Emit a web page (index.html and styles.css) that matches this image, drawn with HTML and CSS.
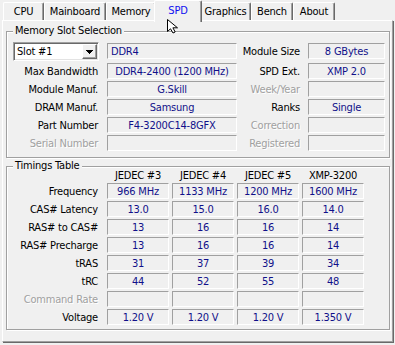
FILE: index.html
```html
<!DOCTYPE html>
<html>
<head>
<meta charset="utf-8">
<link rel="stylesheet" href="styles.css">
</head>
<body>
<div class="app">
  <nav class="tabs">
    <div class="tab t-cpu">CPU</div>
    <div class="tab t-mainboard">Mainboard</div>
    <div class="tab t-memory">Memory</div>
    <div class="tab t-spd active">SPD</div>
    <div class="tab t-graphics">Graphics</div>
    <div class="tab t-bench">Bench</div>
    <div class="tab t-about">About</div>
  </nav>
  <div class="panel">
    <section class="group group-slot">
      <div class="group-title">Memory Slot Selection</div>
      <div class="slot-grid">
        <div class="select"><span class="select-text">Slot #1</span><span class="select-btn"><svg class="arrow" width="7" height="4" viewBox="0 0 7 4"><polygon points="0,0 7,0 3.5,4" fill="#000"/></svg></span></div>
        <div class="field field-left first">DDR4</div>
        <div class="label label-r">Module Size</div>
        <div class="field first">8 GBytes</div>

        <div class="label">Max Bandwidth</div>
        <div class="field">DDR4-2400 (1200 MHz)</div>
        <div class="label label-r">SPD Ext.</div>
        <div class="field">XMP 2.0</div>

        <div class="label">Module Manuf.</div>
        <div class="field">G.Skill</div>
        <div class="label label-r disabled">Week/Year</div>
        <div class="field"></div>

        <div class="label">DRAM Manuf.</div>
        <div class="field">Samsung</div>
        <div class="label label-r">Ranks</div>
        <div class="field">Single</div>

        <div class="label">Part Number</div>
        <div class="field">F4-3200C14-8GFX</div>
        <div class="label label-r disabled">Correction</div>
        <div class="field"></div>

        <div class="label disabled">Serial Number</div>
        <div class="field"></div>
        <div class="label label-r disabled">Registered</div>
        <div class="field"></div>
      </div>
    </section>

    <section class="group group-timings">
      <div class="group-title">Timings Table</div>
      <div class="timing-grid">
        <div></div>
        <div class="head">JEDEC #3</div>
        <div class="head">JEDEC #4</div>
        <div class="head">JEDEC #5</div>
        <div class="head">XMP-3200</div>

        <div class="label">Frequency</div>
        <div class="field">966 MHz</div>
        <div class="field">1133 MHz</div>
        <div class="field">1200 MHz</div>
        <div class="field">1600 MHz</div>

        <div class="label">CAS# Latency</div>
        <div class="field">13.0</div>
        <div class="field">15.0</div>
        <div class="field">16.0</div>
        <div class="field">14.0</div>

        <div class="label">RAS# to CAS#</div>
        <div class="field">13</div>
        <div class="field">16</div>
        <div class="field">16</div>
        <div class="field">14</div>

        <div class="label">RAS# Precharge</div>
        <div class="field">13</div>
        <div class="field">16</div>
        <div class="field">16</div>
        <div class="field">14</div>

        <div class="label">tRAS</div>
        <div class="field">31</div>
        <div class="field">37</div>
        <div class="field">39</div>
        <div class="field">34</div>

        <div class="label">tRC</div>
        <div class="field">44</div>
        <div class="field">52</div>
        <div class="field">55</div>
        <div class="field">48</div>

        <div class="label disabled">Command Rate</div>
        <div class="field"></div>
        <div class="field"></div>
        <div class="field"></div>
        <div class="field"></div>

        <div class="label">Voltage</div>
        <div class="field">1.20 V</div>
        <div class="field">1.20 V</div>
        <div class="field">1.20 V</div>
        <div class="field">1.350 V</div>
      </div>
    </section>
  </div>
  <svg class="cursor" width="13" height="15" viewBox="0 0 13 15">
    <path d="M0.5,0.5 L0.5,12.5 L3.5,9.8 L6,14 L8.2,13 L5.9,8.8 L10.5,8.8 Z" fill="#fff" stroke="#000" stroke-width="1" stroke-linejoin="miter"/>
  </svg>
</div>
</body>
</html>
```

FILE: styles.css
```css
* {
  box-sizing: border-box;
}

html, body {
  margin: 0;
  padding: 0;
}

body {
  width: 395px;
  height: 345px;
  overflow: hidden;
  background: #f0f0f0;
  font-family: "DejaVu Sans Condensed", "DejaVu Sans", sans-serif;
  font-size: 11px;
  letter-spacing: -0.2px;
  color: #000;
}

.app {
  position: relative;
  width: 395px;
  height: 345px;
}

/* Tabs */
.tabs {
  display: flex;
  align-items: flex-end;
  height: 20px;
  padding-left: 3px;
}

.tab {
  height: 18px;
  border-top: 1px solid #fff;
  border-left: 1px solid #fff;
  border-right: 1px solid #696969;
  box-shadow: inset -1px 0 0 #a0a0a0;
  border-radius: 2px 2px 0 0;
  padding-top: 2px;
  line-height: 14px;
  text-align: center;
  white-space: nowrap;
  background: #f0f0f0;
}

.t-cpu { width: 41px; }
.t-mainboard { width: 62px; }
.t-memory { width: 50px; }
.t-spd { width: 44px; }
.t-graphics { width: 51px; }
.t-bench { width: 42px; }
.t-about { width: 42px; }

.tab.active {
  position: relative;
  z-index: 1;
  width: 48px;
  height: 22px;
  margin: 0 -2px -2px -2px;
  padding-top: 3px;
  color: #1010f0;
}

/* Panel */
.panel {
  margin-left: 2px;
  width: 391px;
  height: 322px;
  border-top: 1px solid #fff;
  border-left: 1px solid #fff;
  border-right: 1px solid #a0a0a0;
  border-bottom: 1px solid #a0a0a0;
  box-shadow: 1px 1px 0 #696969;
  padding: 10px 2px 0 3px;
}

.group {
  width: 384px;
  border: 1px solid #a0a0a0;
  box-shadow: inset 1px 1px 0 #fff, 1px 1px 0 #fff;
}

.group-slot {
  height: 127px;
  margin-bottom: 8px;
}

.group-timings {
  height: 164px;
}

.group-title {
  width: fit-content;
  margin: -8px 0 0 6px;
  padding: 0 2px;
  line-height: 14px;
  background: #f0f0f0;
  white-space: nowrap;
}

/* Grids */
.slot-grid {
  display: grid;
  grid-template-columns: 97px 130px 65px 77px;
  grid-template-rows: 18px repeat(5, 16px);
  column-gap: 3px;
  row-gap: 2px;
  margin-top: 5px;
}

.timing-grid {
  display: grid;
  grid-template-columns: 97px repeat(4, 62px);
  grid-template-rows: 14px repeat(8, 16px);
  column-gap: 3px;
  row-gap: 2px;
  margin-top: -6px;
}

.label {
  line-height: 16px;
  padding-top: 1px;
  padding-right: 6px;
  text-align: right;
  white-space: nowrap;
}

.label-r {
  padding-right: 5px;
}

.disabled {
  color: #a0a0a0;
  text-shadow: 1px 1px 0 #fff;
}

.field {
  height: 16px;
  border-top: 1px solid #a0a0a0;
  border-left: 1px solid #a0a0a0;
  border-bottom: 1px solid #fff;
  border-right: 1px solid #fff;
  padding-top: 1px;
  line-height: 14px;
  text-align: center;
  color: #10108a;
  white-space: nowrap;
  overflow: hidden;
}

.field-left {
  text-align: left;
  padding-left: 3px;
}

.first {
  align-self: start;
}

.head {
  padding-top: 2px;
  line-height: 14px;
  text-align: center;
  white-space: nowrap;
}

/* Combo box */
.select {
  align-self: start;
  display: flex;
  width: 86px;
  height: 19px;
  margin: -1px 0 0 6px;
  padding: 1px;
  background: #fff;
  border-top: 1px solid #a0a0a0;
  border-left: 1px solid #a0a0a0;
  border-bottom: 1px solid #fff;
  border-right: 1px solid #fff;
  box-shadow: inset 1px 1px 0 #696969, inset -1px -1px 0 #e3e3e3;
}

.select-text {
  flex: 1;
  padding-left: 2px;
  line-height: 15px;
  white-space: nowrap;
}

.select-btn {
  display: flex;
  align-items: center;
  justify-content: center;
  width: 15px;
  height: 15px;
  background: #f0f0f0;
  border-top: 1px solid #fff;
  border-left: 1px solid #fff;
  border-right: 1px solid #696969;
  border-bottom: 1px solid #696969;
  box-shadow: inset -1px -1px 0 #a0a0a0;
}

.arrow {
  display: block;
  shape-rendering: crispEdges;
}

/* Mouse pointer over the SPD tab */
.cursor {
  position: absolute;
  left: 167px;
  top: 19px;
  z-index: 2;
}
```
